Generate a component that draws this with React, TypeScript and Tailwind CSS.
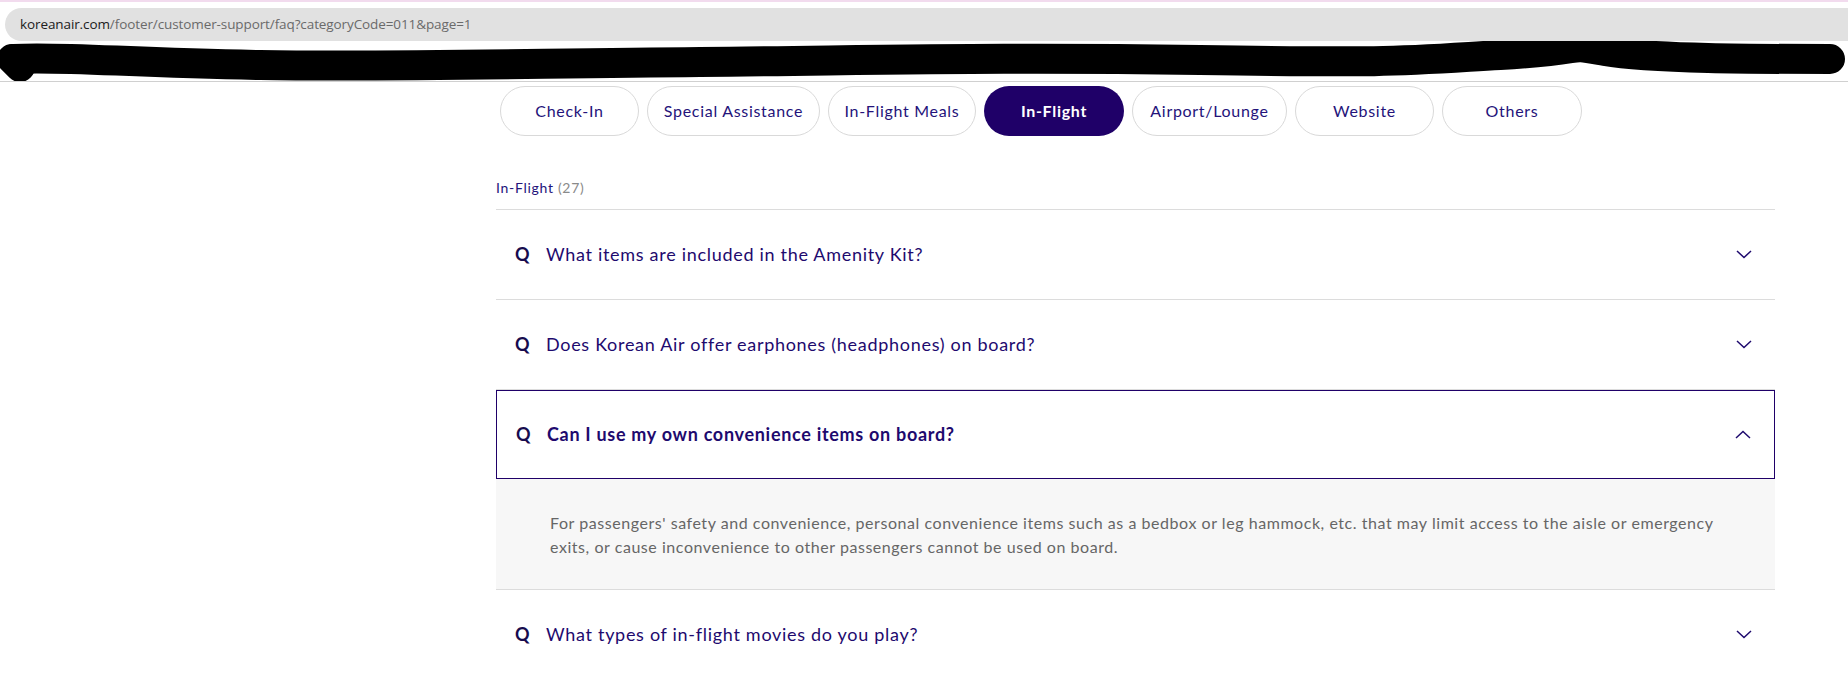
import React, { useState } from "react";

type Faq = {
  id: number;
  question: string;
  answer?: string[];
};

const tabs = [
  { label: "Check-In", width: "w-[139px]" },
  { label: "Special Assistance", width: "w-[173px]" },
  { label: "In-Flight Meals", width: "w-[148px]" },
  { label: "In-Flight", width: "w-[140px]" },
  { label: "Airport/Lounge", width: "w-[155px]" },
  { label: "Website", width: "w-[139px]" },
  { label: "Others", width: "w-[140px]" },
];

const faqs: Faq[] = [
  { id: 1, question: "What items are included in the Amenity Kit?" },
  { id: 2, question: "Does Korean Air offer earphones (headphones) on board?" },
  {
    id: 3,
    question: "Can I use my own convenience items on board?",
    answer: [
      "For passengers' safety and convenience, personal convenience items such as a bedbox or leg hammock, etc. that may limit access to the aisle or emergency",
      "exits, or cause inconvenience to other passengers cannot be used on board.",
    ],
  },
  { id: 4, question: "What types of in-flight movies do you play?" },
];

const Chevron = ({ up }: { up?: boolean }) => (
  <svg width="16" height="9" viewBox="0 0 16 9" fill="none" className="shrink-0">
    <polyline
      points={up ? "1,8 8,1.5 15,8" : "1,1 8,7.5 15,1"}
      stroke="#1e0a6e"
      strokeWidth="1.5"
    />
  </svg>
);

export default function App() {
  const [active, setActive] = useState("In-Flight");
  const [openId, setOpenId] = useState<number | null>(3);

  return (
    <div className="relative h-[675px] w-[1848px] overflow-hidden bg-white font-['Lato',sans-serif]">
      {/* browser chrome */}
      <div className="h-[2px] bg-[#f2dbee]" />
      <div className="pt-[6px]">
        <div className="ml-[5px] flex h-[33px] items-center rounded-l-full bg-[#e1e1e1] pl-[15px] font-['Open_Sans',sans-serif] text-[13.5px] tracking-[-0.1px]">
          <span className="text-[#202020]">koreanair.com</span>
          <span className="text-[#6a6a6a]">/footer/customer-support/faq?categoryCode=011&amp;page=1</span>
        </div>
      </div>
      <svg width="1848" height="40" viewBox="0 0 1848 40" className="block">
        <path
          d="M 14 18 C 60 15, 130 22, 260 24 S 500 23, 700 21 S 1000 16, 1200 19 S 1400 20, 1500 14 S 1560 2, 1605 10 S 1760 18, 1830 18"
          stroke="#000"
          strokeWidth="30"
          strokeLinecap="round"
          fill="none"
        />
        <path d="M 12 18 L 20 26" stroke="#000" strokeWidth="30" strokeLinecap="round" />
      </svg>
      <div className="h-px bg-[#d0d0d0]" />

      {/* content */}
      <div className="ml-[496px] w-[1279px]">
        <div className="mt-[4px] ml-[4px] flex gap-[8px]">
          {tabs.map((tab) => {
            const isActive = tab.label === active;
            return (
              <button
                key={tab.label}
                type="button"
                onClick={() => setActive(tab.label)}
                className={`h-[50px] ${tab.width} rounded-full text-[16px] tracking-[0.7px] ${
                  isActive
                    ? "bg-[#1f0068] font-bold text-white"
                    : "border border-[#d9d9d9] bg-white text-[#24137a]"
                }`}
              >
                {tab.label}
              </button>
            );
          })}
        </div>

        <div className="mt-[42px] border-b border-[#dcdcdc] pb-[11px] text-[14px] leading-[20px] tracking-[0.7px] text-[#24137a]">
          In-Flight <span className="text-[#8a8a8a]">(27)</span>
        </div>

        {faqs.map((faq) => {
          const isOpen = openId === faq.id;
          return (
            <div key={faq.id}>
              <button
                type="button"
                onClick={() => setOpenId(isOpen ? null : faq.id)}
                className={`flex w-full items-center text-left ${
                  isOpen
                    ? "h-[89px] border border-[#1f0068]"
                    : "h-[90px] border-b border-[#dcdcdc]"
                } pl-[19px] pr-[23px]`}
              >
                <span className="w-[31px] text-[18px] font-bold text-[#170c4f]">Q</span>
                <span
                  className={`flex-1 text-[18px] tracking-[0.7px] text-[#1e0a6e] ${
                    isOpen ? "font-bold" : ""
                  }`}
                >
                  {faq.question}
                </span>
                <Chevron up={isOpen} />
              </button>
              {isOpen && faq.answer && (
                <div className="border-b border-[#dcdcdc] bg-[#f7f7f7] pt-[32px] pb-[30px] pl-[54px] pr-[30px] text-[16px] leading-[24px] tracking-[0.55px] text-[#666666]">
                  {faq.answer.map((line, i) => (
                    <div key={i} className="whitespace-nowrap">
                      {line}
                    </div>
                  ))}
                </div>
              )}
            </div>
          );
        })}
      </div>
    </div>
  );
}
